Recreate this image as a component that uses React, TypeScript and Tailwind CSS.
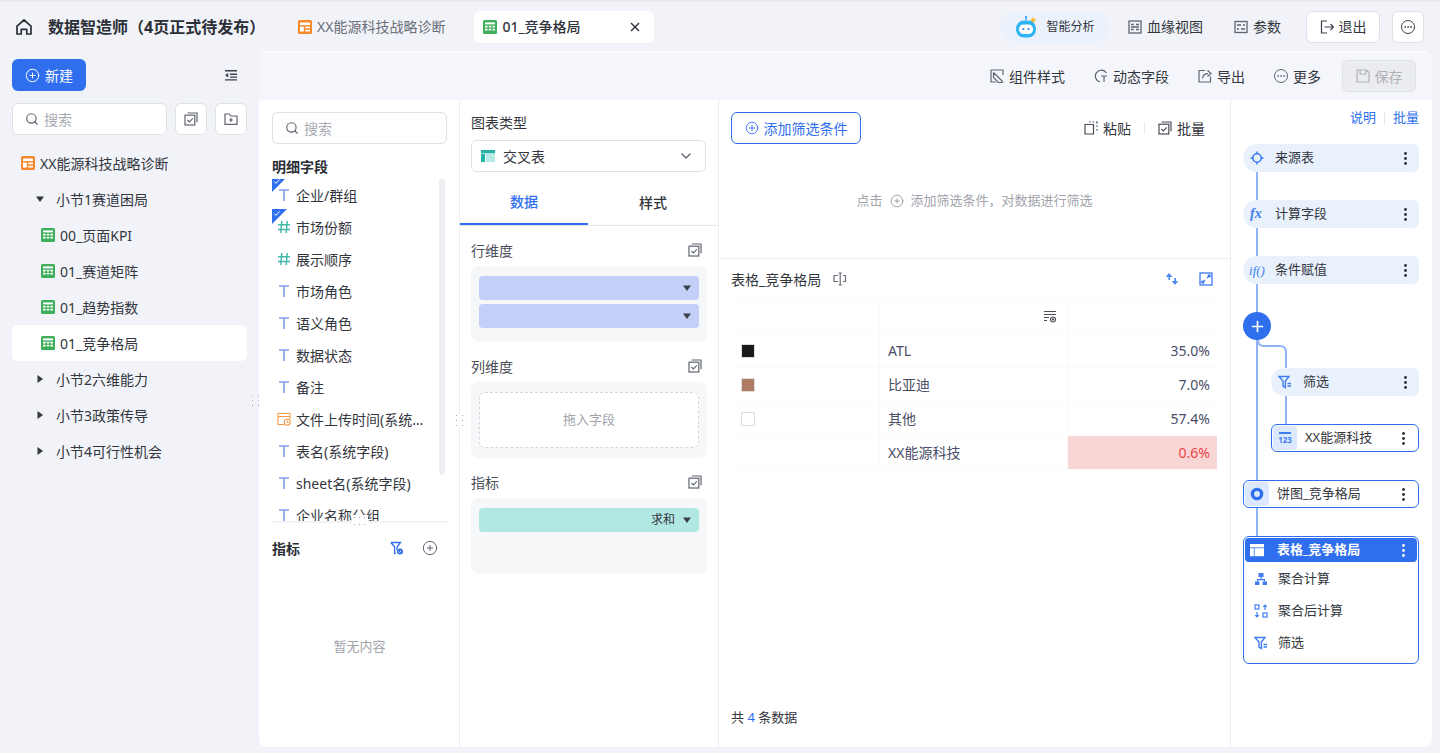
import { ChevronDown, CirclePlus, Ellipsis, Plus, Search } from "lucide-react";

const BLUE = "#2f6fed";

const HomeIcon = () => (
  <svg width="18" height="18" viewBox="0 0 18 18" fill="none" stroke="#2b2f36" strokeWidth="1.7">
    <path d="M2 8.2 9 2l7 6.2V16h-4.2v-4.6H6.2V16H2z" strokeLinejoin="round" />
  </svg>
);

// orange dashboard glyph
const BoardIcon = () => (
  <svg width="14" height="14" viewBox="0 0 14 14">
    <rect width="14" height="14" rx="1.5" fill="#f5892b" />
    <rect x="2" y="2.5" width="10" height="2.6" fill="#fff" />
    <rect x="2" y="6.6" width="3.8" height="5" fill="#fff" />
    <rect x="7.2" y="6.6" width="4.8" height="1.7" fill="#fff" />
    <rect x="7.2" y="9.8" width="4.8" height="1.7" fill="#fff" />
  </svg>
);

const SheetIcon = () => (
  <svg width="14" height="14" viewBox="0 0 14 14">
    <rect width="14" height="14" rx="1.5" fill="#3fae5a" />
    <rect x="2" y="2.4" width="10" height="2" fill="#fff" />
    <path d="M2 5.8h2.6v1.6H2zM5.7 5.8h2.6v1.6H5.7zM9.4 5.8H12v1.6H9.4zM2 8.8h2.6v1.6H2zM5.7 8.8h2.6v1.6H5.7zM9.4 8.8H12v1.6H9.4z" fill="#fff" />
  </svg>
);

const BatchIcon = ({ color = "#5f6470" }: { color?: string }) => (
  <svg width="14" height="14" viewBox="0 0 14 14" fill="none" stroke={color} strokeWidth="1.2">
    <rect x="1" y="3.2" width="9.8" height="9.8" />
    <path d="M3.6 1h9.4v9.2" />
    <path d="m3.4 8 2 2 3.4-3.6" strokeWidth="1.1" />
  </svg>
);

const FolderPlus = () => (
  <svg width="14" height="14" viewBox="0 0 14 14" fill="none" stroke="#5f6470" strokeWidth="1.2">
    <path d="M1 2h4.4l1.4 2H13v8.4H1z" />
    <path d="M7 6v4M5 8h4" />
  </svg>
);

const OutdentIcon = () => (
  <svg width="14" height="14" viewBox="0 0 14 14" fill="#3b3f48">
    <path d="M1 2h12v1.4H1zM6 5.6h7V7H6zM6 8.4h7v1.4H6zM1 11.2h12v1.4H1zM4.2 5v4.6L1 7.3z" />
  </svg>
);

const Caret = ({ color = "#33363d", right = false }: { color?: string; right?: boolean }) => (
  <svg width="8" height="8" viewBox="0 0 8 8" fill={color}>
    {right ? <path d="M1.5 0 7 4 1.5 8z" /> : <path d="M0 1.5h8L4 7z" />}
  </svg>
);

const TreeRow = ({ label, open = false }: { label: string; open?: boolean }) => (
  <div className="flex h-9 items-center pl-6 text-[14px] text-[#33363d]">
    <Caret right={!open} />
    <span className="ml-3">{label}</span>
  </div>
);

const SheetRow = ({ label, active = false }: { label: string; active?: boolean }) => (
  <div className={`flex h-9 items-center rounded-md pl-[29px] text-[14px] text-[#33363d] ${active ? "bg-white" : ""}`}>
    <SheetIcon />
    <span className="ml-[5px]">{label}</span>
  </div>
);

const Sidebar = () => (
  <aside className="flex w-[259px] shrink-0 flex-col">
    <div className="flex items-center justify-between pl-3 pr-[21px] pt-2">
      <button className="flex h-8 w-[74px] items-center justify-center gap-[5px] rounded-md bg-[#2f6fed] text-[14px] text-white">
        <CirclePlus size={15} strokeWidth={1.6} />
        新建
      </button>
      <OutdentIcon />
    </div>
    <div className="mt-3 flex gap-2 pl-3">
      <div className="flex h-8 w-[155px] items-center gap-[5px] rounded-md border border-[#dfe1e8] bg-white pl-3 text-[14px] text-[#a8abb3]">
        <Search size={14} color="#5f6470" />
        搜索
      </div>
      <div className="ml-0 flex h-8 w-8 items-center justify-center rounded-md border border-[#dfe1e8] bg-white"><BatchIcon /></div>
      <div className="flex h-8 w-8 items-center justify-center rounded-md border border-[#dfe1e8] bg-white"><FolderPlus /></div>
    </div>
    <div className="mt-[10px] pl-3 pr-3">
      <div className="flex h-9 items-center pl-[9px] text-[14px] text-[#33363d]">
        <BoardIcon />
        <span className="ml-[5px]">XX能源科技战略诊断</span>
      </div>
      <TreeRow label="小节1赛道困局" open />
      <SheetRow label="00_页面KPI" />
      <SheetRow label="01_赛道矩阵" />
      <SheetRow label="01_趋势指数" />
      <SheetRow label="01_竞争格局" active />
      <TreeRow label="小节2六维能力" />
      <TreeRow label="小节3政策传导" />
      <TreeRow label="小节4可行性机会" />
    </div>
  </aside>
);

const RobotIcon = () => (
  <svg width="26" height="24" viewBox="0 0 26 24">
    <path d="M18 1.5 19 4l2.5.6L19.4 6l.3 2.4L18 7l-2 1 .5-2.3L15 4.4l2.3-.5z" fill="#f7b733" />
    <path d="M11 5V2.5" stroke="#2f9df0" strokeWidth="1.4" />
    <circle cx="11" cy="2" r="1.1" fill="#2f9df0" />
    <rect x="1" y="5.5" width="20" height="17" rx="8" fill="#31b4f5" />
    <rect x="4" y="9.5" width="14" height="9.5" rx="4.5" fill="#fff" />
    <circle cx="8.4" cy="14" r="1.1" fill="#2f7ded" />
    <circle cx="13.6" cy="14" r="1.1" fill="#2f7ded" />
  </svg>
);

const LineageIcon = () => (
  <svg width="14" height="14" viewBox="0 0 14 14" fill="none" stroke="#5f6470" strokeWidth="1.3">
    <rect x="1" y="1" width="12" height="12" />
    <path d="M3 4.5h2.8M8 4.5h3M3 9.5h2.8M8 9.5h3M3 7h8" />
  </svg>
);

const ParamIcon = () => (
  <svg width="14" height="14" viewBox="0 0 14 14" fill="none" stroke="#5f6470" strokeWidth="1.3">
    <rect x="1" y="1.5" width="12" height="11" />
    <path d="M3 5h4M9 5h2M3 9h2M7 9h4" />
  </svg>
);

const ExitIcon = () => (
  <svg width="14" height="14" viewBox="0 0 14 14" fill="none" stroke="#3b3f48" strokeWidth="1.2">
    <path d="M7 1H1.5v12H7M4.5 7h9M10.5 4l3 3-3 3" />
  </svg>
);

const TopBar = () => (
  <header className="flex h-[51px] shrink-0 items-center border-t-2 border-[#e8e9ee] pl-[15px] pr-[16px]">
    <HomeIcon />
    <span className="ml-[5px] mr-[8px] h-3 w-px bg-[#eceef3]" />
    <span className="ml-[1px] w-[250px] text-[16px] font-bold text-[#2b2f36]">数据智造师（4页正式待发布）</span>
    <div className="flex items-center gap-[5px] text-[14px] text-[#6a6e78]">
      <BoardIcon />
      XX能源科技战略诊断
    </div>
    <div className="ml-[29px] flex h-8 w-[180px] items-center justify-between rounded-md bg-white px-[14px] pl-[9px] pr-[14px] text-[14px] font-medium text-[#33363d]">
      <div className="flex items-center gap-[5px]"><SheetIcon />01_竞争格局</div>
      <svg width="10" height="10" viewBox="0 0 10 10" stroke="#2b2f36" strokeWidth="1.4"><path d="m1 1 8 8M9 1 1 9" /></svg>
    </div>
    <div className="ml-auto flex items-center">
      <div className="flex h-8 w-[110px] items-center justify-center gap-[5px] rounded-2xl bg-[#ebf2fc] text-[12px] text-[#33363d]">
        <RobotIcon />
        智能分析
      </div>
      <div className="ml-[18px] flex items-center gap-[5px] text-[14px] text-[#33363d]"><LineageIcon />血缘视图</div>
      <div className="ml-[31px] flex items-center gap-[5px] text-[14px] text-[#33363d]"><ParamIcon />参数</div>
      <button className="ml-[25px] flex h-8 w-[74px] items-center justify-center gap-[5px] rounded-md border border-[#dfe1e8] bg-white text-[14px] text-[#33363d]"><ExitIcon />退出</button>
      <button className="ml-3 flex h-8 w-8 items-center justify-center rounded-md border border-[#dfe1e8] bg-white"><span className="flex h-[14px] w-[14px] items-center justify-center rounded-full border border-[#3b3f48]"><Ellipsis size={10} color="#3b3f48" /></span></button>
    </div>
  </header>
);

const StyleIcon = () => (
  <svg width="14" height="14" viewBox="0 0 14 14" fill="none" stroke="#5f6470" strokeWidth="1.2">
    <path d="M1 1h12v5M1 1v12h5M3.5 3.5l9 9M3.5 3.5v5l5 5h4v-1" />
  </svg>
);

const DynamicIcon = () => (
  <svg width="14" height="14" viewBox="0 0 14 14" fill="none" stroke="#5f6470" strokeWidth="1.2">
    <path d="M12.5 4A6 6 0 1 0 6 13" />
    <path d="M7 7h6M10 7v6" />
  </svg>
);

const ExportIcon = () => (
  <svg width="14" height="14" viewBox="0 0 14 14" fill="none" stroke="#5f6470" strokeWidth="1.2">
    <path d="M7 1.5H1V13h11.5V7.5" />
    <path d="M4.5 9.5C5 6.5 7 4.6 10 4.6M9.5 1.5l3.5 3-3.5 3" />
  </svg>
);

const SaveIcon = () => (
  <svg width="14" height="14" viewBox="0 0 14 14" fill="none" stroke="#b0b3ba" strokeWidth="1.2">
    <path d="M1 1h9.5L13 3.5V13H1zM4 1v4h6V1" />
  </svg>
);

const MoreCircle = () => (
  <span className="flex h-[14px] w-[14px] items-center justify-center rounded-full border border-[#5f6470]"><Ellipsis size={10} color="#5f6470" /></span>
);

const Toolbar = () => (
  <div className="flex h-[49px] shrink-0 items-center justify-end gap-[25px] border-t border-white bg-[#f5f6fb] pr-4 text-[14px] text-[#33363d]">
    <div className="flex items-center gap-[5px]"><StyleIcon />组件样式</div>
    <div className="ml-1 flex items-center gap-[5px]"><DynamicIcon />动态字段</div>
    <div className="ml-1 flex items-center gap-[5px]"><ExportIcon />导出</div>
    <div className="ml-1 flex items-center gap-[5px]"><MoreCircle />更多</div>
    <button className="-ml-1 flex h-8 w-[74px] items-center justify-center gap-[5px] rounded-md border border-[#dfe1e8] bg-[#ebecef] text-[#b0b3ba]"><SaveIcon />保存</button>
  </div>
);

const TextGlyph = () => (
  <svg width="14" height="14" viewBox="0 0 14 14" fill="none" stroke="#7f9ee0" strokeWidth="1.6"><path d="M2 2h10M7 2v11" /></svg>
);

const HashGlyph = () => (
  <svg width="14" height="14" viewBox="0 0 14 14" fill="none" stroke="#46b9ac" strokeWidth="1.5"><path d="M4.8 1 3.8 13M10.2 1l-1 12M1 4.8h12M1 9.4h12" /></svg>
);

const DateGlyph = () => (
  <svg width="14" height="14" viewBox="0 0 14 14" fill="none" stroke="#f29a4a" strokeWidth="1.1">
    <path d="M7 12.5H1V1.5h12V7M1 4.5h12" />
    <circle cx="10.3" cy="10.3" r="3" />
    <path d="M10.3 8.8v1.6h1.3" />
  </svg>
);

const FieldRow = ({ label, kind, checked = false }: { label: string; kind: "t" | "h" | "d"; checked?: boolean }) => (
  <div className="relative flex h-8 shrink-0 items-center pl-[5px] text-[14px] text-[#33363d]">
    {checked && (
      <svg className="absolute left-0 top-[-2px]" width="15" height="15" viewBox="0 0 15 15">
        <path d="M0 0h15L0 15z" fill={BLUE} />
        <path d="m2 4.4 2 2 3.6-4" stroke="#fff" strokeWidth="1" fill="none" />
      </svg>
    )}
    {kind === "t" ? <TextGlyph /> : kind === "h" ? <HashGlyph /> : <DateGlyph />}
    <span className="ml-[5px] w-[130px] truncate">{label}</span>
  </div>
);

const GripDots = () => (
  <svg width="10" height="14" viewBox="0 0 10 14" fill="#a5a8b0">
    <path d="M1 1h1v1H1zM7 1h1v1H7zM1 6h1v1H1zM7 6h1v1H7zM1 11h1v1H1zM7 11h1v1H7z" />
  </svg>
);

const FilterCheck = () => (
  <svg width="14" height="14" viewBox="0 0 14 14" fill="none" stroke={BLUE} strokeWidth="1.3">
    <path d="M1 1.5h9.5L7 6v3" />
    <path d="M1 1.5 4.6 6v6.5L6 12" />
    <circle cx="10" cy="10.5" r="3" fill={BLUE} stroke="none" />
    <path d="m8.6 10.5 1 1 1.7-1.8" stroke="#fff" strokeWidth="0.9" />
  </svg>
);

const FieldPanel = () => (
  <section className="relative flex h-full w-[201px] shrink-0 flex-col border-r border-[#ebecf0] pl-[13px] pr-3 pt-3">
    <div className="flex h-8 shrink-0 items-center gap-[5px] rounded-md border border-[#dfe1e8] pl-3 text-[14px] text-[#a8abb3]">
      <Search size={14} color="#5f6470" />
      搜索
    </div>
    <div className="mt-[14px] h-[18px] shrink-0 text-[14px] font-bold leading-[18px] text-[#2b2f36]">明细字段</div>
    <div className="relative mt-[3px] h-[342px] shrink-0 overflow-hidden">
      <span className="absolute right-[2px] top-[-2px] h-[298px] w-[6px] rounded-sm bg-[#eef0f3]" />
      <div className="flex flex-col">
        <FieldRow label="企业/群组" kind="t" checked />
        <FieldRow label="市场份额" kind="h" checked />
        <FieldRow label="展示顺序" kind="h" />
        <FieldRow label="市场角色" kind="t" />
        <FieldRow label="语义角色" kind="t" />
        <FieldRow label="数据状态" kind="t" />
        <FieldRow label="备注" kind="t" />
        <FieldRow label="文件上传时间(系统字段)" kind="d" />
        <FieldRow label="表名(系统字段)" kind="t" />
        <FieldRow label="sheet名(系统字段)" kind="t" />
        <FieldRow label="企业名称分组" kind="t" />
      </div>
    </div>
    <div className="relative h-[2px] shrink-0 bg-[#f1f2f4]">
      <span className="absolute left-[80px] top-[-6px] flex h-3 items-center bg-white text-[0px]"><svg width="16" height="12" viewBox="0 0 16 12" fill="#a5a8b0"><path d="M2 2h1v1H2zM7 2h1v1H7zM12 2h1v1h-1zM2 9h1v1H2zM7 9h1v1H7zM12 9h1v1h-1z" /></svg></span>
    </div>
    <div className="mt-[16px] flex h-[18px] shrink-0 items-center justify-between pr-[9px] text-[14px] font-bold text-[#2b2f36]">
      指标
      <div className="flex items-center gap-[18px]">
        <FilterCheck />
        <CirclePlus size={16} color="#5f6470" strokeWidth={1.5} />
      </div>
    </div>
    <div className="flex flex-1 items-center justify-center pb-[10px] text-[13px] text-[#a1a4ab]">暂无内容</div>
    <span className="absolute right-[-6px] top-[314px] bg-white"><GripDots /></span>
  </section>
);

const TealTable = () => (
  <svg width="14" height="14" viewBox="0 0 14 14">
    <rect y="1" width="14" height="3.4" fill="#26b3a6" />
    <rect y="5" width="4" height="8" fill="#26b3a6" />
    <rect x="4.8" y="5" width="9.2" height="8" fill="#b5ebe4" />
  </svg>
);

const DimHeader = ({ label, className = "" }: { label: string; className?: string }) => (
  <div className={`flex h-4 items-center justify-between pr-[5px] text-[14px] text-[#4a4e58] ${className}`}>
    {label}
    <BatchIcon />
  </div>
);

const DimPill = ({ label }: { label?: string }) => (
  <div className="flex h-6 items-center justify-end gap-[8px] rounded bg-[#c4cff8] pr-2 text-[12px] text-[#33363d]">
    {label}
    <Caret color="#3b3f48" />
  </div>
);

const ConfigPanel = () => (
  <section className="flex h-full w-[259px] shrink-0 flex-col border-r border-[#ebecf0]">
    <div className="px-[11px] pt-[14px]">
      <div className="h-[18px] text-[14px] leading-[18px] text-[#33363d]">图表类型</div>
      <div className="mt-[8px] flex h-8 w-[235px] items-center justify-between rounded-md border border-[#dfe1e8] pl-[9px] pr-[11px] text-[14px] text-[#33363d]">
        <div className="flex items-center gap-2"><TealTable />交叉表</div>
        <ChevronDown size={16} color="#5f6470" />
      </div>
    </div>
    <div className="mt-2 flex h-[46px] shrink-0 border-b border-[#e3e5ec] text-[14px]">
      <div className="flex w-[128px] items-center justify-center border-b-2 border-[#2f6fed] font-medium text-[#2f6fed]">数据</div>
      <div className="flex w-[130px] items-center justify-center font-medium text-[#33363d]">样式</div>
    </div>
    <div className="px-[11px] pt-[16px]">
      <DimHeader label="行维度" />
      <div className="mt-2 flex h-[76px] w-[236px] flex-col gap-1 rounded-lg bg-[#f6f7f9] px-2 pt-[10px]">
        <DimPill />
        <DimPill />
      </div>
      <DimHeader label="列维度" className="mt-4" />
      <div className="mt-2 h-[76px] w-[236px] rounded-lg bg-[#f6f7f9] px-2 pt-[10px]">
        <div className="flex h-[56px] items-center justify-center rounded-md border border-dashed border-[#d5d7dd] bg-white text-[13px] text-[#a1a4ab]">拖入字段</div>
      </div>
      <DimHeader label="指标" className="mt-4" />
      <div className="mt-2 h-[76px] w-[236px] rounded-lg bg-[#f6f7f9] px-2 pt-[10px]">
        <div className="flex h-6 items-center justify-end gap-[8px] rounded bg-[#b2e8e3] pr-2 text-[12px] text-[#33363d]">
          求和
          <Caret color="#3b3f48" />
        </div>
      </div>
    </div>
  </section>
);

const PasteIcon = () => (
  <svg width="14" height="14" viewBox="0 0 14 14" fill="none" stroke="#4a4e58" strokeWidth="1.2">
    <path d="M1 3.5h8.5V13H1z" />
    <path d="M5 1h1.5M8.5 1H10M12 1h1v1.5M13 4.5V6M13 8v1.5" />
  </svg>
);

const SwapIcon = () => (
  <svg width="14" height="14" viewBox="0 0 14 14" fill="#4a8bf0">
    <path d="M4 1 7.5 5H5v3H3.4V5H.8zM10 13 6.8 9h2.6V6H11v3h2.4z" />
  </svg>
);

const ExpandIcon = () => (
  <svg width="14" height="14" viewBox="0 0 14 14" fill="none" stroke={BLUE} strokeWidth="1.2">
    <rect x="1" y="1" width="12" height="12" />
    <path d="M8 6 11 3M8.6 3H11v2.4M6 8l-3 3M3 8.6V11h2.4" />
  </svg>
);

const TitleCursor = () => (
  <svg width="14" height="14" viewBox="0 0 14 14" fill="none" stroke="#6a6e78" strokeWidth="1.2">
    <path d="M5 3.5H1v6h4M10 3.5h2.5v6H10M5.5 1H9M7.2 1v12M5.5 13H9" />
  </svg>
);

const ColumnSetting = () => (
  <svg width="14" height="14" viewBox="0 0 14 14" fill="none" stroke="#4a4e58" strokeWidth="1.1">
    <path d="M1 1.5h12M1 4.5h12M1 7.5h5M1 10.5h3" />
    <circle cx="10" cy="9.5" r="2.5" />
    <circle cx="10" cy="9.5" r=".6" fill="#4a4e58" />
  </svg>
);

const TableRow = ({ swatch, name, value, warn = false }: { swatch?: string; name: string; value: string; warn?: boolean }) => (
  <div className="flex h-[34px] border-b border-[#fafafa] text-[14px] text-[#4a4e66]">
    <div className="flex w-[149px] items-center border-r border-[#fafafa] pl-[10px]">
      {swatch && <span className="h-[14px] w-[14px] rounded-[1px] border border-[#dcdcdc]" style={{ background: swatch }} />}
    </div>
    <div className="flex w-[188px] items-center border-r border-[#fafafa] pl-2">{name}</div>
    <div className={`flex flex-1 items-center justify-end pr-[7px] ${warn ? "bg-[#f9d6d6] text-[#ef4444]" : ""}`}>{value}</div>
  </div>
);

const CenterPanel = () => (
  <section className="flex h-full w-[512px] shrink-0 flex-col border-r border-[#ebecf0]">
    <div className="h-[159px] shrink-0 border-b border-[#ebecf0] px-3 pt-3">
      <div className="flex items-center justify-between pr-[13px]">
        <button className="flex h-8 w-[130px] items-center justify-center gap-[5px] rounded-md border border-[#2f6fed] text-[14px] text-[#2f6fed]">
          <CirclePlus size={14} strokeWidth={1.5} />
          添加筛选条件
        </button>
        <div className="flex items-center text-[14px] text-[#33363d]">
          <span className="flex items-center gap-[5px]"><PasteIcon />粘贴</span>
          <span className="mx-[13px] h-3 w-px bg-[#e5e6ea]" />
          <span className="flex items-center gap-[5px]"><BatchIcon color="#4a4e58" />批量</span>
        </div>
      </div>
      <div className="mt-[47px] flex items-center justify-center gap-[7px] text-[13px] text-[#a1a4ab]">
        点击
        <CirclePlus size={14} strokeWidth={1.4} color="#8f929a" />
        添加筛选条件，对数据进行筛选
      </div>
    </div>
    <div className="flex flex-1 flex-col px-3 pt-[12px]">
      <div className="flex h-4 items-center justify-between pr-[5px] text-[14px] text-[#33363d]">
        <div className="flex items-center gap-[12px]">表格_竞争格局<TitleCursor /></div>
        <div className="flex items-center gap-[20px]"><SwapIcon /><ExpandIcon /></div>
      </div>
      <div className="mt-[13px] w-[486px]">
        <div className="flex h-[34px] border-y border-[#fafafa]">
          <div className="w-[149px] border-r border-[#fafafa]" />
          <div className="flex w-[188px] items-center justify-end border-r border-[#fafafa] pr-[10px]"><ColumnSetting /></div>
          <div className="flex-1" />
        </div>
        <TableRow swatch="#1a1a1a" name="ATL" value="35.0%" />
        <TableRow swatch="#b07c66" name="比亚迪" value="7.0%" />
        <TableRow swatch="#ffffff" name="其他" value="57.4%" />
        <TableRow name="XX能源科技" value="0.6%" warn />
      </div>
      <div className="mt-auto pb-[20px] text-[13px] text-[#33363d]">共 <span className="text-[#2f6fed]">4</span> 条数据</div>
    </div>
  </section>
);

const Kebab = ({ color = "#2b2f36" }: { color?: string }) => (
  <svg className="ml-auto mr-[12px]" width="3" height="13" viewBox="0 0 3 13" fill={color}>
    <circle cx="1.5" cy="1.5" r="1.4" /><circle cx="1.5" cy="6.5" r="1.4" /><circle cx="1.5" cy="11.5" r="1.4" />
  </svg>
);

const SourceIcon = () => (
  <svg width="14" height="14" viewBox="0 0 14 14" fill="none" stroke="#3f7df0" strokeWidth="1.6">
    <circle cx="7" cy="7" r="4.2" />
    <path d="M7 .5v2.6M7 10.9v2.6M.5 7h2.6M10.9 7h2.6" />
  </svg>
);

const FxIcon = () => <span className="w-[14px] font-['Liberation_Serif',serif] text-[14px] font-bold italic leading-none text-[#3f7df0]">fx</span>;
const IfIcon = () => <span className="w-[16px] whitespace-nowrap font-['Liberation_Serif',serif] text-[13px] italic leading-none text-[#3f7df0]">if()</span>;

const FilterIcon = () => (
  <svg width="14" height="14" viewBox="0 0 14 14" fill="none" stroke="#3f7df0" strokeWidth="1.4">
    <path d="M1 1.5h10L7.4 6v6.5L5 11V6z" />
    <path d="M9.5 8.5H13M9.5 11H13" />
  </svg>
);

const PillNode = ({ icon, label, className = "" }: { icon: React.ReactNode; label: string; className?: string }) => (
  <div className={`flex h-7 items-center rounded-l-[14px] rounded-r-md bg-[#e9f1fd] pl-[7px] text-[13px] text-[#33363d] ${className}`}>
    <span className="flex w-[14px] justify-center">{icon}</span>
    <span className="ml-[11px]">{label}</span>
    <Kebab />
  </div>
);

const BoxNode = ({ icon, label, className = "" }: { icon: React.ReactNode; label: string; className?: string }) => (
  <div className={`flex h-7 items-center rounded-md border border-[#2f6fed] bg-white p-[1px] text-[13px] text-[#33363d] ${className}`}>
    <span className="flex h-6 w-6 items-center justify-center rounded bg-[#dbe8fd]">{icon}</span>
    <span className="ml-[8px]">{label}</span>
    <Kebab />
  </div>
);

const Num123 = () => (
  <span className="flex flex-col items-center text-[8px] font-bold leading-[9px] text-[#3f7df0]">
    <span className="mb-[1px] h-[2px] w-3 bg-[#3f7df0]" />123
  </span>
);

const Donut = () => (
  <svg width="14" height="14" viewBox="0 0 14 14" fill="none"><circle cx="7" cy="7" r="4.6" stroke="#2f6fed" strokeWidth="3.4" /></svg>
);

const AggIcon = () => (
  <svg width="14" height="14" viewBox="0 0 14 14" fill="#3f7df0">
    <path d="M4.5 1h5v4h-5zM1 9.5h4.4V13H1zM8.6 9.5H13V13H8.6z" />
    <path d="M6.4 5h1.2v2H11v2.5H9.8V8.2H4.2v1.3H3V7h3.4z" />
  </svg>
);

const AfterIcon = () => (
  <svg width="14" height="14" viewBox="0 0 14 14" fill="none" stroke="#3f7df0" strokeWidth="1.2">
    <rect x="1" y="1" width="4" height="4" /><rect x="9" y="9" width="4" height="4" />
    <path d="M11 6V1M9.2 2.8 11 1l1.8 1.8M3 8v5M1.2 11.2 3 13l1.8-1.8" />
  </svg>
);

const TableWhite = () => (
  <svg width="14" height="14" viewBox="0 0 14 14" fill="#fff">
    <rect y="1" width="14" height="3.4" /><rect y="5.2" width="3.8" height="8" /><rect x="4.6" y="5.2" width="9.4" height="8" />
  </svg>
);

const SubStep = ({ icon, label }: { icon: React.ReactNode; label: string }) => (
  <div className="flex h-8 items-center pl-[9px] text-[13px] text-[#33363d]">
    <span className="w-[14px]">{icon}</span>
    <span className="ml-[10px]">{label}</span>
  </div>
);

const FlowPanel = () => (
  <section className="relative flex h-full flex-1 flex-col pl-3 pr-[13px] pt-[9px]">
    <div className="flex h-[17px] items-center justify-end text-[13px] text-[#2f6fed]">
      说明<span className="mx-[8px] h-3 w-px bg-[#e5e6ea]" />批量
    </div>
    {/* connectors */}
    <span className="absolute left-[25px] top-[72px] h-[365px] w-[2px] bg-[#8fb4f6]" />
    <svg className="absolute left-[26px] top-[240px]" width="30" height="30" viewBox="0 0 30 30" fill="none" stroke="#8fb4f6" strokeWidth="2">
      <path d="M1 0c0 4 2 6 6 6h16c4 0 6 2 6 6v18" />
    </svg>
    <span className="absolute left-[54px] top-[296px] h-[28px] w-[2px] bg-[#8fb4f6]" />
    <div className="relative mt-[18px] flex flex-col gap-7">
      <PillNode icon={<SourceIcon />} label="来源表" />
      <PillNode icon={<FxIcon />} label="计算字段" />
      <PillNode icon={<IfIcon />} label="条件赋值" />
      <span className="flex h-7 w-7 items-center justify-center rounded-full bg-[#2f6fed]"><Plus size={17} color="#fff" strokeWidth={2.4} /></span>
      <PillNode icon={<FilterIcon />} label="筛选" className="ml-7" />
      <BoxNode icon={<Num123 />} label="XX能源科技" className="ml-7" />
      <BoxNode icon={<Donut />} label="饼图_竞争格局" />
      <div className="h-[128px] rounded-md border border-[#2f6fed] bg-white p-[1px]">
        <div className="flex h-6 items-center rounded bg-[#2f6fed] pl-[5px] text-[13px] font-bold text-white">
          <TableWhite />
          <span className="ml-[13px]">表格_竞争格局</span>
          <Kebab color="#fff" />
        </div>
        <div className="mt-[1px]">
          <SubStep icon={<AggIcon />} label="聚合计算" />
          <SubStep icon={<AfterIcon />} label="聚合后计算" />
          <SubStep icon={<FilterIcon />} label="筛选" />
        </div>
      </div>
    </div>
  </section>
);

export default function App() {
  return (
    <div className="flex h-[753px] w-[1440px] flex-col overflow-hidden bg-[#f1f3f9] font-['Noto_Sans','Noto_Sans_CJK_SC',sans-serif]">
      <TopBar />
      <div className="flex min-h-0 flex-1 pb-[6px] pr-2">
        <Sidebar />
        <main className="relative flex min-w-0 flex-1 flex-col overflow-hidden rounded-lg bg-white">
          <Toolbar />
          <div className="flex min-h-0 flex-1">
            <FieldPanel />
            <ConfigPanel />
            <CenterPanel />
            <FlowPanel />
          </div>
        </main>
        <span className="absolute left-[251px] top-[394px]"><GripDots /></span>
      </div>
    </div>
  );
}
